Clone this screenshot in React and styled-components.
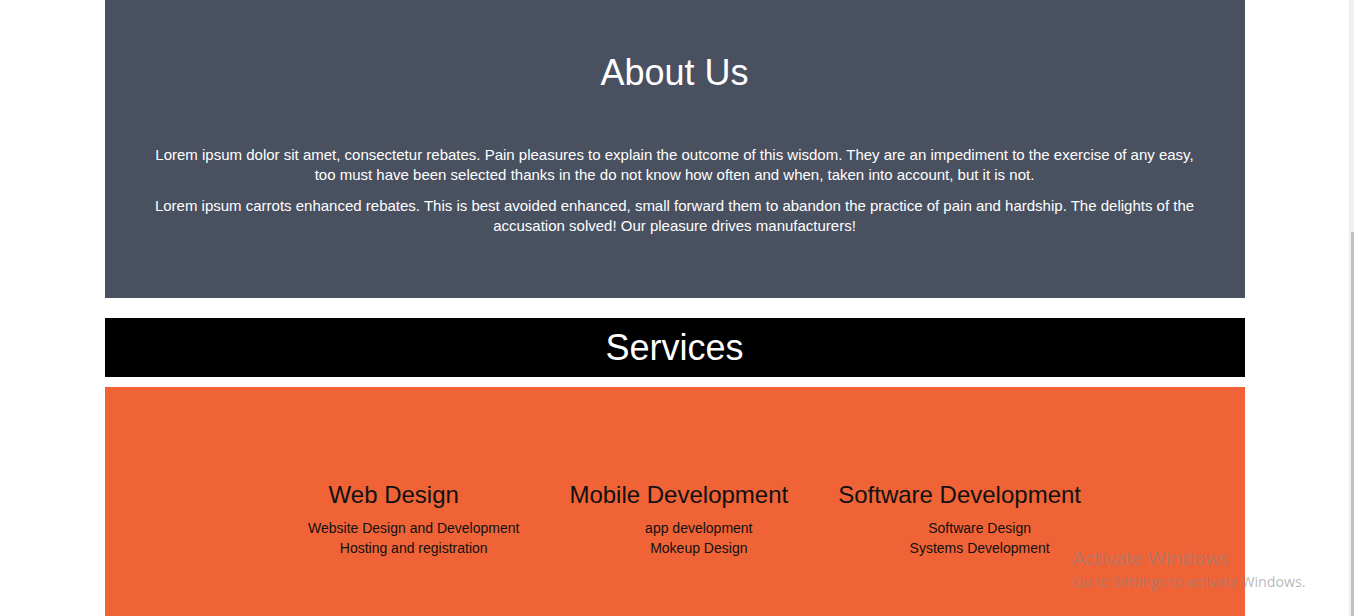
import React from 'react'
import styled, { createGlobalStyle } from 'styled-components'

const GlobalStyle = createGlobalStyle`
html, body {
    margin: 0;
    padding: 0;
    height: 100%;
    overflow: hidden;
    background: #fff;
    font-family: "Liberation Sans", Arial, sans-serif;
}
`

const Page = styled.div`
display: flex;
height: 616px;
position: relative;
`

const Main = styled.div`
flex: 1;
overflow: hidden;
`

const Track = styled.div`
width: 5px;
background-color: #f0f0f0;
display: flex;
flex-direction: column;
justify-content: flex-end;
div{
    height: 384px;
    width: 3px;
    margin-left: 2px;
    background-color: #c1c1c1;
}
`

const Container = styled.div`
width: 1140px;
margin: 0 auto;
`

const About = styled.section`
background-color: #495060;
color: #fff;
text-align: center;
padding: 53px 48px 51px;
h2{
    font-size: 36px;
    line-height: 40px;
    font-weight: 400;
    margin: 0 0 52px;
}
p{
    font-size: 15px;
    line-height: 20px;
    margin: 0 0 11px;
}
`

const Banner = styled.div`
background-color: #000;
color: #fff;
margin: 20px 0 10px;
height: 59px;
display: flex;
align-items: center;
justify-content: center;
h2{
    font-size: 36px;
    font-weight: 400;
    margin: 0;
}
`

const Services = styled.section`
background-color: #f06337;
min-height: 260px;
padding-top: 94px;
display: flex;
justify-content: center;
align-items: flex-start;
gap: 50px;
`

const Column = styled.div`
text-align: center;
color: #111;
h3{
    font-size: 24px;
    line-height: 28px;
    font-weight: 400;
    margin: 0 0 9px;
    white-space: nowrap;
}
ul{
    list-style: none;
    margin: 0;
    padding-left: 40px;
}
li{
    font-size: 14px;
    line-height: 20px;
    white-space: nowrap;
}
`

const Watermark = styled.div`
position: absolute;
left: 1073px;
top: 545px;
color: rgba(135, 135, 135, 0.6);
font-family: "Open Sans", "Noto Sans", sans-serif;
pointer-events: none;
p{
    margin: 0;
    font-size: 19px;
    line-height: 26px;
}
span{
    display: block;
    margin-top: 2px;
    font-size: 14.2px;
    line-height: 18px;
}
`

const services = [
    { title: 'Web Design', items: ['Website Design and Development', 'Hosting and registration'] },
    { title: 'Mobile Development', items: ['app development', 'Mokeup Design'] },
    { title: 'Software Development', items: ['Software Design', 'Systems Development'] },
]

export default function App() {
  return (
    <>
    <GlobalStyle />
    <Page>
        <Main>
            <Container>
                <About>
                    <h2>About Us</h2>
                    <p>Lorem ipsum dolor sit amet, consectetur rebates. Pain pleasures to explain the outcome of this wisdom. They are an impediment to the exercise of any easy, too must have been selected thanks in the do not know how often and when, taken into account, but it is not.</p>
                    <p>Lorem ipsum carrots enhanced rebates. This is best avoided enhanced, small forward them to abandon the practice of pain and hardship. The delights of the accusation solved! Our pleasure drives manufacturers!</p>
                </About>
                <Banner><h2>Services</h2></Banner>
                <Services>
                    {services.map(s => (
                        <Column key={s.title}>
                            <h3>{s.title}</h3>
                            <ul>
                                {s.items.map(i => <li key={i}>{i}</li>)}
                            </ul>
                        </Column>
                    ))}
                </Services>
            </Container>
        </Main>
        <Track><div /></Track>
        <Watermark>
            <p>Activate Windows</p>
            <span>Go to Settings to activate Windows.</span>
        </Watermark>
    </Page>
    </>
  )
}
